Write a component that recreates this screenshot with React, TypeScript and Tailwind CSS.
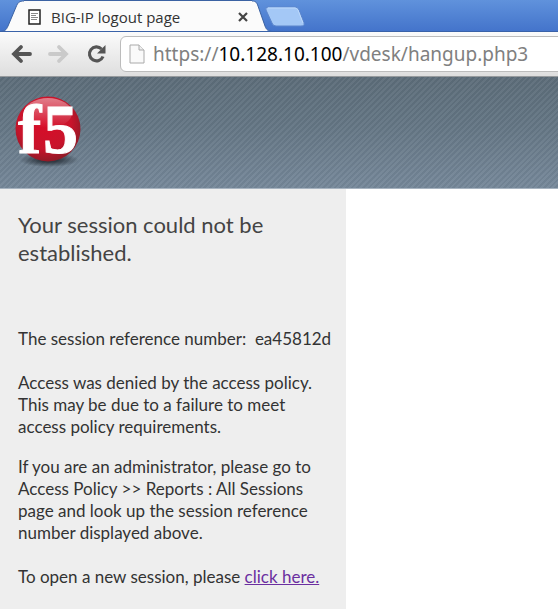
function TabStrip() {
  return (
    <div className="flex h-8 items-end overflow-hidden border-b border-[#3a62a8] bg-linear-to-b from-[#6092dc] to-[#4474cb]">
      <div className="-mb-px flex h-8 shrink-0">
        <svg width="24" height="32" viewBox="0 0 24 32" aria-hidden="true">
          <path d="M0 32V31.5C5 31 6 30.500 8 26L16 7C18 2.500 19 1 24 1V32Z" fill="#fbfbfb" />
          <path d="M0 31.500C5 31 6 30.500 8 26L16 7C18 2.500 19 1 24 1" fill="none" stroke="#3b62a3" />
        </svg>
        <div className="flex w-[228px] items-center border-t border-[#3b62a3] bg-[#fbfbfb] pl-1">
          <svg width="13" height="16" viewBox="0 0 13 16" aria-hidden="true">
            <rect x="1" y="1" width="11" height="14" fill="#fff" stroke="#222" strokeWidth="1.500" />
            <path d="M3 4.500H10M3 6.500H8M3 8.500H10M3 10.500H9" stroke="#888" />
          </svg>
          <span className="ml-[10px] flex-1 whitespace-nowrap text-[15px] leading-5 text-[#333]">BIG-IP logout page</span>
          <button aria-label="Close tab" className="mr-px flex size-4 items-center justify-center">
            <svg width="10" height="10" viewBox="0 0 10 10" aria-hidden="true">
              <path d="M1 1L9 9M9 1L1 9" stroke="#444" strokeWidth="2.200" />
            </svg>
          </button>
        </div>
        <svg width="20" height="32" viewBox="0 0 20 32" aria-hidden="true">
          <path d="M0 1C4 1 5 3 6 6L13 26C14.500 30 16 31 20 31.500V32H0Z" fill="#fbfbfb" />
          <path d="M0 1C4 1 5 3 6 6L13 26C14.500 30 16 31 20 31.500" fill="none" stroke="#3b62a3" />
        </svg>
      </div>
      <button aria-label="New tab" className="-ml-[7px] mb-1 shrink-0">
        <svg width="40" height="21" viewBox="0 0 40 21" className="block" aria-hidden="true">
          <path d="M3 1H30Q33 1 34 4L39 17Q40 20 36 20H11Q8 20 7 17L1 4Q0 1 3 1Z" fill="#a4c8f6" stroke="#5c86cc" />
          <path d="M3 2H30Q32 2 33 4L38 17" fill="none" stroke="#bdd9fb" />
        </svg>
      </button>
    </div>
  );
}

function Toolbar() {
  return (
    <div className="flex h-[45px] items-center overflow-hidden border-b border-[#969a9d] bg-linear-to-b from-[#fbfbfb] to-[#dedede] pl-[10px]">
      <button aria-label="Back" className="shrink-0">
        <svg width="24" height="20" viewBox="0 0 24 20" className="block" aria-hidden="true">
          <path d="M20 10H5M11 3L4 10L11 17" fill="none" stroke="#555" strokeWidth="3.800" strokeLinecap="round" />
        </svg>
      </button>
      <button aria-label="Forward" className="ml-3 shrink-0">
        <svg width="24" height="20" viewBox="0 0 24 20" className="block" aria-hidden="true">
          <path d="M4 10H19M13 3L20 10L13 17" fill="none" stroke="#cacaca" strokeWidth="3.800" strokeLinecap="round" />
        </svg>
      </button>
      <button aria-label="Reload" className="ml-4 shrink-0">
        <svg width="20" height="20" viewBox="0 0 20 20" className="block" aria-hidden="true">
          <path d="M15.500 5A7 7 0 1 0 17 12.500" fill="none" stroke="#555" strokeWidth="3.200" />
          <path d="M19.500 1V9.500H11Z" fill="#555" />
        </svg>
      </button>
      <div className="-mr-2 ml-[14px] flex h-9 flex-1 items-center rounded-md border border-[#bcbcbc] bg-white pl-2">
        <svg width="16" height="20" viewBox="0 0 16 20" aria-hidden="true">
          <path d="M1 1H10L15 6V19H1Z" fill="#fafafa" stroke="#aaa" />
          <path d="M10 1V6H15" fill="#eee" stroke="#aaa" />
        </svg>
        <div className="ml-2 whitespace-nowrap font-['Noto_Sans',sans-serif] text-[19px] leading-7 text-[#808080]">
          https://<span className="text-black">10.128.10.100</span>/vdesk/hangup.php3
        </div>
      </div>
    </div>
  );
}

function Logo() {
  return (
    <svg width="72" height="92" viewBox="0 -8 72 92" role="img" aria-label="f5">
      <defs>
        <radialGradient id="ball" cx="0.45" cy="0.4" r="0.62">
          <stop offset="0" stopColor="#d80c28" />
          <stop offset="0.65" stopColor="#c9142b" />
          <stop offset="1" stopColor="#8c1a26" />
        </radialGradient>
        <linearGradient id="shine" x1="0" y1="0" x2="0" y2="1">
          <stop offset="0" stopColor="#fff" stopOpacity="0.45" />
          <stop offset="1" stopColor="#fff" stopOpacity="0" />
        </linearGradient>
        <radialGradient id="shade">
          <stop offset="0.3" stopColor="#202830" stopOpacity="0.8" />
          <stop offset="1" stopColor="#202830" stopOpacity="0" />
        </radialGradient>
      </defs>
      <ellipse cx="35" cy="64" rx="30" ry="7" fill="url(#shade)" />
      <circle cx="34" cy="33" r="32.500" fill="url(#ball)" />
      <ellipse cx="34" cy="17" rx="24" ry="15" fill="url(#shine)" />
      <g fill="#fff" stroke="#fff" className="font-['Liberation_Serif',serif] font-bold">
        <text x="4" y="57" fontSize="70" strokeWidth="1">f</text>
        <text x="29" y="57" fontSize="70" strokeWidth="1">5</text>
      </g>
    </svg>
  );
}

export default function App() {
  return (
    <div className="flex min-h-screen flex-col bg-white font-['Open_Sans',sans-serif]">
      <TabStrip />
      <Toolbar />
      <header className="h-28 border-b border-[#a7b3c0] bg-[repeating-linear-gradient(135deg,#ffffff0c_0px,#ffffff0c_2px,#00000008_2px,#00000008_4px),linear-gradient(#5c6c79,#647684_45%,#758799)] pl-[14px] pt-[11px]">
        <Logo />
      </header>
      <main className="w-[62%] grow bg-[#eee] pl-[18px] pt-[22px] font-['Lato',sans-serif] text-[17px] leading-[22px] text-[#333]">
        <h1 className="text-[22px] leading-[28px] text-[#444]">
          Your session could not be<br />established.
        </h1>
        <p className="mt-[61px] whitespace-pre">The session reference number:  ea45812d</p>
        <p className="mt-[22px]">
          Access was denied by the access policy.<br />This may be due to a failure to meet<br />access policy requirements.
        </p>
        <p className="mt-[18px]">
          If you are an administrator, please go to<br />Access Policy &gt;&gt; Reports : All Sessions<br />page and look up the session reference<br />number displayed above.
        </p>
        <p className="mt-[22px]">
          To open a new session, please <a href="#" className="text-[#6b2fa0] underline">click here.</a>
        </p>
      </main>
    </div>
  );
}
